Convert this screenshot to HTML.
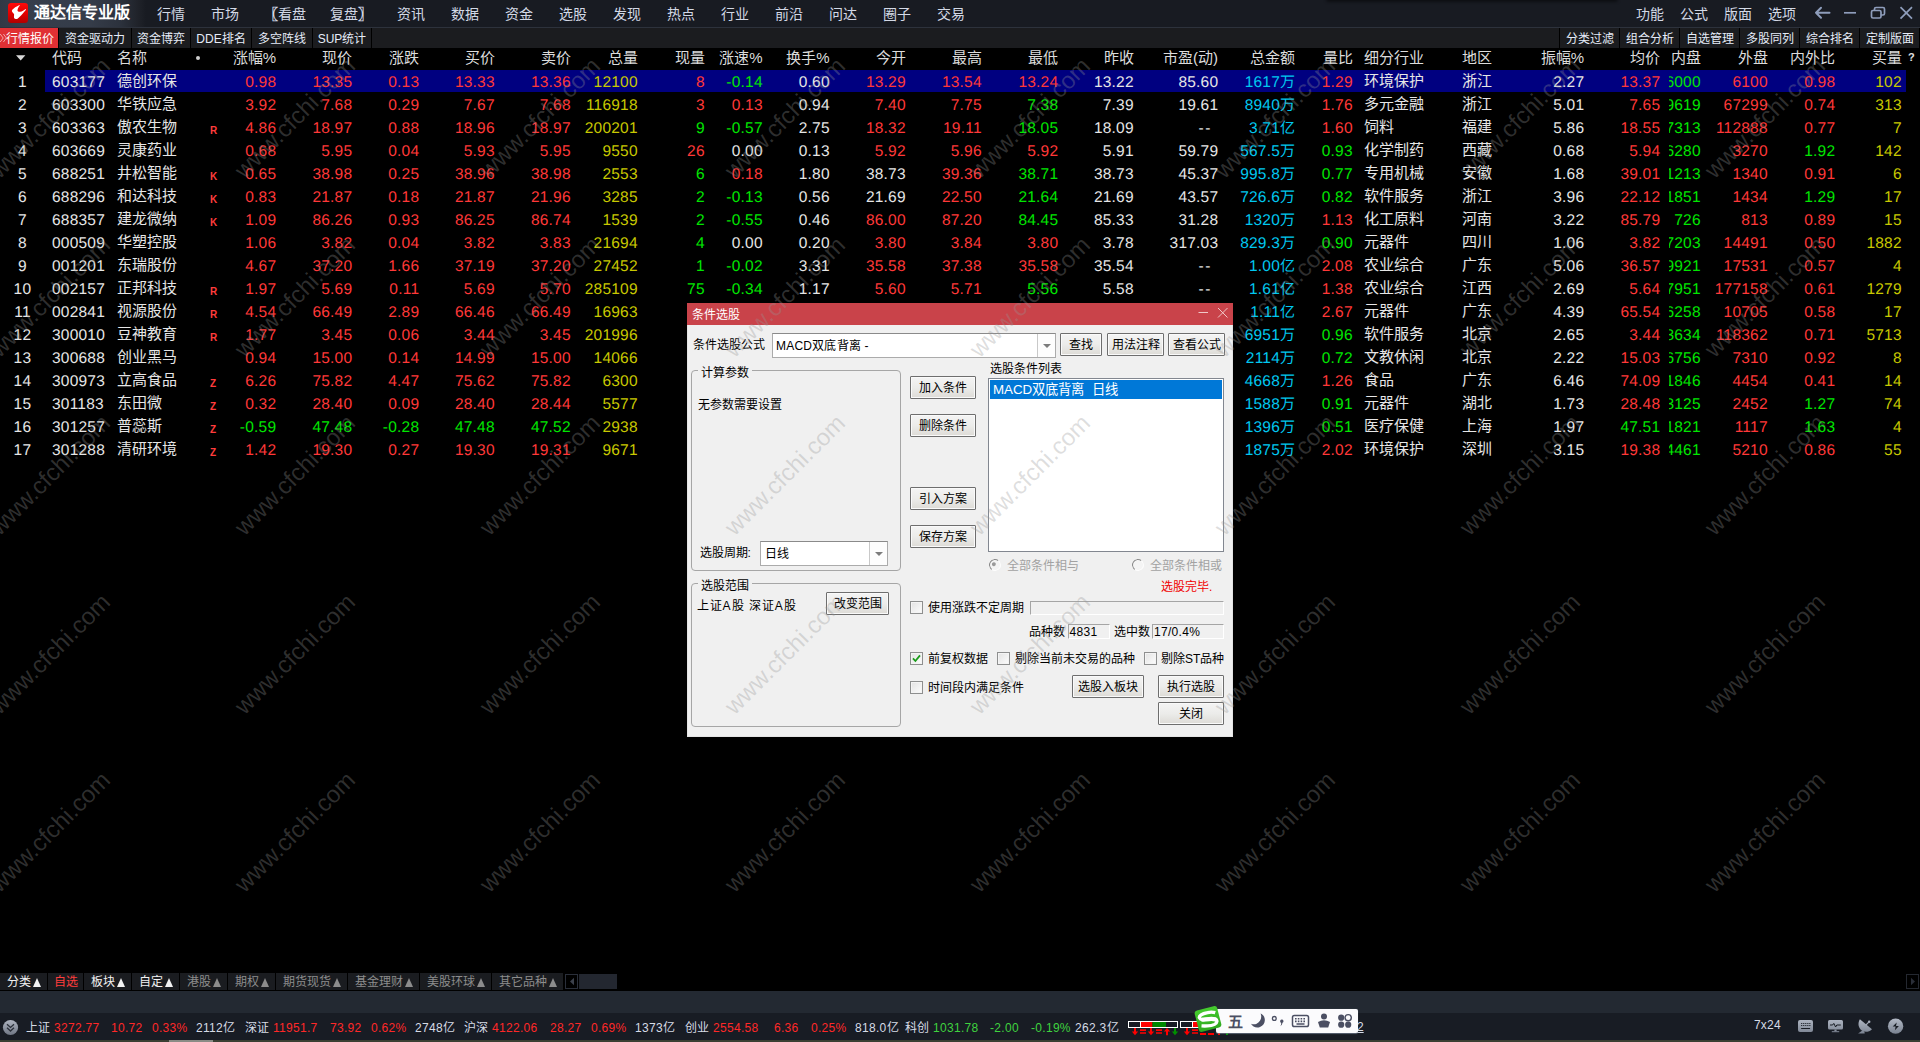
<!DOCTYPE html>
<html lang="zh-CN">
<head>
<meta charset="utf-8">
<title>通达信专业版</title>
<style>
html,body{margin:0;padding:0;background:#000;}
body{width:1920px;height:1042px;overflow:hidden;position:relative;font-family:"Liberation Sans",sans-serif;color:#e4e4e4;}
div,span{box-sizing:border-box;}
.abs{position:absolute;}
/* ---------- title bar ---------- */
#titlebar{position:absolute;left:0;top:0;width:1920px;height:28px;background:#181b22;border-bottom:1px solid #2d323c;}
#titlegrad{position:absolute;left:0;top:0;width:146px;height:27px;background:linear-gradient(90deg,#313845 0%,#363e4c 15%,#353c49 62%,#2c323d 82%,#1f2229 95%,#181b22 100%);}
#logo{position:absolute;left:8px;top:3px;width:20px;height:20px;}
#apptitle{position:absolute;left:34px;top:0;height:27px;line-height:25px;font-size:16px;font-weight:bold;color:#fff;white-space:nowrap;}
.menu{position:absolute;top:0;height:27px;line-height:29px;font-size:14px;color:#d3d9e6;white-space:nowrap;}
.wbtn{position:absolute;top:0;}
/* ---------- toolbar ---------- */
#toolbar{position:absolute;left:0;top:28px;width:1920px;height:20px;background:#1b1c1f;}
.tab{position:absolute;top:0;height:20px;line-height:22px;font-size:12px;color:#e6ecf8;background:#1b1c1f;text-align:center;white-space:nowrap;box-shadow:1px 0 0 #000,-1px 0 0 #000;}
.tab.act{background:#e03034;color:#fff;}
/* ---------- table ---------- */
#grid{position:absolute;left:0;top:48px;width:1920px;height:925px;background:#000;overflow:hidden;}
.hd{position:absolute;top:0;height:22px;line-height:19px;font-size:15px;color:#dcdcdc;white-space:nowrap;}
.row{position:absolute;left:0;width:1920px;height:23px;}
.sel{position:absolute;left:45px;top:0;width:1861px;height:22px;background:#000080;}
.c{position:absolute;top:0;height:23px;line-height:25px;font-size:15.5px;white-space:nowrap;letter-spacing:0.21px;text-rendering:geometricPrecision;}
.cj{position:absolute;top:0;height:23px;line-height:22px;font-size:15px;white-space:nowrap;}
.mk{position:absolute;top:0;height:23px;line-height:29px;font-size:10px;font-weight:bold;color:#ff3c3c;}
.r{color:#ff3838;}.g{color:#00e600;}.w{color:#e6e6e6;}.y{color:#c8c800;}.cy{color:#00c8f0;}
.clip{position:absolute;top:0;height:23px;overflow:hidden;}

/* ---------- bottom tabs ---------- */
#btabs{position:absolute;left:0;top:973px;width:1920px;height:18px;background:#000;}
.bt{position:absolute;top:0;height:17px;line-height:19px;font-size:12px;background:#1a1c20;color:#f2f2f2;white-space:nowrap;text-align:center;}
.bt.dim{color:#8c8c8c;}
.bt.red{color:#ff3c3c;}
.tri{display:inline-block;width:0;height:0;border-left:4.5px solid transparent;border-right:4.5px solid transparent;border-bottom:9px solid currentColor;margin-left:2px;vertical-align:-0.5px;}
#strip{position:absolute;left:0;top:991px;width:1920px;height:22px;background:#232932;}
#status{position:absolute;left:0;top:1013px;width:1920px;height:27px;background:#181c24;}
#bline{position:absolute;left:0;top:1040px;width:1920px;height:2px;background:#3a3f33;}
.st{position:absolute;top:0;height:27px;line-height:31px;font-size:12px;white-space:nowrap;letter-spacing:0.3px;}
.st.n{color:#d6dbe6;}.st.r{color:#ff2828;}.st.g{color:#3fd23f;}
/* sogou */
#sogou{position:absolute;left:1216px;top:1009px;width:142px;height:24px;background:#fbfbfd;border-radius:2px;box-shadow:0 0.5px 1px rgba(120,130,150,0.7);}

.wm{position:absolute;width:200px;height:30px;margin-left:-100px;margin-top:-15px;line-height:30px;text-align:center;font-size:24px;color:rgba(150,150,150,0.31);transform:rotate(-45deg);white-space:nowrap;pointer-events:none;letter-spacing:0px;}

/* ---------- dialog ---------- */
#dlg{position:absolute;left:687px;top:303px;width:546px;height:434px;background:#f0f0f0;border:1px solid #e4e4e4;border-top:none;font-size:12px;color:#000;}
#dlgtitle{position:absolute;left:-1px;top:0;width:546px;height:22px;background:#c9434a;color:#fff;line-height:24px;padding-left:5px;font-size:12px;}
.lb{position:absolute;height:16px;line-height:16px;font-size:12px;color:#000;white-space:nowrap;}
.btn{position:absolute;height:23px;line-height:23.5px;font-size:12px;color:#000;text-align:center;white-space:nowrap;border:1px solid #6e6e6e;border-radius:1px;background:linear-gradient(#f4f4f4 0%,#ececea 50%,#dddbd6 100%);box-shadow:inset 0 0 0 1px #fafafa;}
.grp{position:absolute;border:1px solid #a6a6a6;border-radius:4px;}
.grpl{position:absolute;height:14px;line-height:14px;font-size:12px;background:#f0f0f0;padding:0 3px;white-space:nowrap;}
.combo{position:absolute;background:#fff;border:1px solid #ababab;border-top-color:#8a8a8a;}
.cbtn{position:absolute;right:0;top:0;bottom:0;width:18px;border-left:1px solid #c9c9c9;background:#fdfdfd;}
.cbtn:after{content:"";position:absolute;left:5px;top:50%;margin-top:-2px;border-left:4px solid transparent;border-right:4px solid transparent;border-top:4px solid #7c7c7c;}
.chk{position:absolute;width:13px;height:13px;background:linear-gradient(135deg,#e2e2e2,#fdfdfd);border:1px solid #8e8f8f;box-shadow:inset 0 0 0 1px #f4f4f4;}
.sunk{position:absolute;border:1px solid;border-color:#a5a5a5 #fff #fff #a5a5a5;background:#f0f0f0;font-size:12px;line-height:15px;white-space:nowrap;letter-spacing:0.3px;}
.radio{position:absolute;width:12px;height:12px;border-radius:6px;border:1.6px solid;border-color:#8a8a8a #fdfdfd #fdfdfd #8a8a8a;background:#f4f4f4;transform:rotate(-8deg);}
</style>
</head>
<body>

<div id="titlebar">
<div id="titlegrad"></div>
<div class="abs" style="left:1326px;top:-3px;width:292px;height:5px;border-radius:3px;background:rgba(0,0,0,0.45);filter:blur(1.5px)"></div>
<svg id="logo" viewBox="0 0 20 20" width="20" height="20">
<defs><linearGradient id="lg" x1="0" y1="0" x2="0" y2="1"><stop offset="0" stop-color="#ff0a0a"/><stop offset="0.55" stop-color="#e00000"/><stop offset="1" stop-color="#b00000"/></linearGradient></defs>
<rect x="0" y="0" width="20" height="20" rx="3.2" ry="3.2" fill="url(#lg)"/>
<path d="M11.5 2.1 C10 2.9 8.4 3.7 7.2 4.3 C6 5.2 4.8 6.2 4.2 7 C3.8 7.6 3.8 8.2 4 8.6 C4.4 9.4 5.2 10.2 6 11 C6.2 11.6 6 12.6 5.95 14 C6 15 6.4 15.6 7 15.8 C7.8 16.1 8.6 16.1 9.2 15.9 C10.2 15.2 11.2 14.3 12 13.4 C13 12.4 14 11.3 15 10.2 C16 9 17 7.9 18 6.7 C17.9 6.4 17.7 6.2 17.4 6.1 C16.6 6.7 15.8 7.3 15 7.75 C14 8.3 13 8.6 12.2 8.7 C11.4 8.8 10.6 8.7 10.2 8.45 C9.7 8.2 9.5 7.9 9.5 7.4 C9.5 6.7 9.7 6 10 5.2 C10.5 4.2 11.1 3.4 11.8 2.5 Z" fill="#fff"/>
</svg>
<div id="apptitle">通达信专业版</div>
<div class="menu" style="left:157px">行情</div>
<div class="menu" style="left:211px">市场</div>
<div class="menu" style="left:264px"><b>〖</b>看盘</div>
<div class="menu" style="left:330px">复盘<b>〗</b></div>
<div class="menu" style="left:397px">资讯</div>
<div class="menu" style="left:451px">数据</div>
<div class="menu" style="left:505px">资金</div>
<div class="menu" style="left:559px">选股</div>
<div class="menu" style="left:613px">发现</div>
<div class="menu" style="left:667px">热点</div>
<div class="menu" style="left:721px">行业</div>
<div class="menu" style="left:775px">前沿</div>
<div class="menu" style="left:829px">问达</div>
<div class="menu" style="left:883px">圈子</div>
<div class="menu" style="left:937px">交易</div>
<div class="menu" style="left:1635.5px">功能</div>
<div class="menu" style="left:1680px">公式</div>
<div class="menu" style="left:1724px">版面</div>
<div class="menu" style="left:1767.5px">选项</div>
<svg class="wbtn" style="left:1810px" width="110" height="27" viewBox="0 0 110 27">
<g fill="none" stroke="#8e9dbb" stroke-width="2" stroke-linecap="round" stroke-linejoin="round">
<path d="M6 12.8 H19.5 M11 7.8 L6 12.8 L11 17.8"/>
</g>
<g fill="none" stroke="#8e9dbb" stroke-width="1.7">
<path d="M34 12.8 H46"/>
<rect x="61.5" y="10.5" width="9.5" height="7.5" rx="1.5"/>
<path d="M64.5 10.5 V9 Q64.5 7.5 66 7.5 H73 Q74.5 7.5 74.5 9 V13.5 Q74.5 15 73 15 H71"/>
<path d="M90.5 7.2 L102 18.6 M102 7.2 L90.5 18.6"/>
</g>
</svg>
</div>
<div id="toolbar">
<div class="tab act" style="left:0px;width:58px;text-align:left;padding-left:6px"><svg style="position:absolute;left:0;top:5px" width="8" height="10" viewBox="0 0 8 10"><path d="M0.2 1 L3.2 5 L0.2 9 M3.4 1 L6.4 5 L3.4 9" fill="none" stroke="#f2a6a6" stroke-width="1"/></svg>行情报价</div>
<div class="tab" style="left:59px;width:72px">资金驱动力</div>
<div class="tab" style="left:132px;width:58px">资金博弈</div>
<div class="tab" style="left:191px;width:60px">DDE排名</div>
<div class="tab" style="left:252px;width:60px">多空阵线</div>
<div class="tab" style="left:313px;width:58px">SUP统计</div>
<div class="tab" style="left:1560px;width:59px">分类过滤</div>
<div class="tab" style="left:1620px;width:59px">组合分析</div>
<div class="tab" style="left:1680px;width:59px">自选管理</div>
<div class="tab" style="left:1740px;width:59px">多股同列</div>
<div class="tab" style="left:1800px;width:59px">综合排名</div>
<div class="tab" style="left:1860px;width:59px">定制版面</div>
</div>
<div id="grid">
<div class="hd" style="left:0;width:1920px">
<svg class="abs" style="left:15px;top:6px" width="12" height="8" viewBox="0 0 12 8"><path d="M1 1.2 H10.4 L5.7 6.6 Z" fill="#d8d8d8"/></svg>
<span class="abs" style="left:196px;top:8px;width:4px;height:4px;border-radius:2px;background:#d0d0d0"></span>
<span class="hd" style="left:52px">代码</span>
<span class="hd" style="left:117px">名称</span>
<span class="hd" style="right:1644px">涨幅%</span>
<span class="hd" style="right:1568px">现价</span>
<span class="hd" style="right:1501px">涨跌</span>
<span class="hd" style="right:1425.5px">买价</span>
<span class="hd" style="right:1349.5px">卖价</span>
<span class="hd" style="right:1282.5px">总量</span>
<span class="hd" style="right:1215.5px">现量</span>
<span class="hd" style="right:1157.5px">涨速%</span>
<span class="hd" style="right:1090.5px">换手%</span>
<span class="hd" style="right:1014.5px">今开</span>
<span class="hd" style="right:938.5px">最高</span>
<span class="hd" style="right:862px">最低</span>
<span class="hd" style="right:786.5px">昨收</span>
<span class="hd" style="right:702px">市盈(动)</span>
<span class="hd" style="right:625px">总金额</span>
<span class="hd" style="right:567.5px">量比</span>
<span class="hd" style="left:1364px">细分行业</span>
<span class="hd" style="left:1462px">地区</span>
<span class="hd" style="right:336px">振幅%</span>
<span class="hd" style="right:260px">均价</span>
<span class="hd" style="left:1671px">内盘</span>
<span class="hd" style="right:152.5px">外盘</span>
<span class="hd" style="right:85px">内外比</span>
<span class="hd" style="right:18.5px">买量</span>
<span class="abs" style="left:1908px;top:2px;font-size:11px;font-weight:bold;line-height:14px;color:#e0e0e0">?</span>
</div>
<div class="row" style="top:22px">
<div class="sel"></div>
<span class="c w" style="left:0;width:45px;text-align:center;letter-spacing:0.3px">1</span>
<span class="c w" style="left:52px">603177</span>
<span class="cj w" style="left:117px">德创环保</span>
<span class="c r" style="right:1643.79px">0.98</span>
<span class="c r" style="right:1567.79px">13.35</span>
<span class="c r" style="right:1500.79px">0.13</span>
<span class="c r" style="right:1425.29px">13.33</span>
<span class="c r" style="right:1349.29px">13.36</span>
<span class="c y" style="right:1282.29px">12100</span>
<span class="c r" style="right:1215.29px">8</span>
<span class="c g" style="right:1157.29px">-0.14</span>
<span class="c w" style="right:1090.29px">0.60</span>
<span class="c r" style="right:1014.29px">13.29</span>
<span class="c r" style="right:938.29px">13.54</span>
<span class="c r" style="right:861.79px">13.24</span>
<span class="c w" style="right:786.29px">13.22</span>
<span class="c w" style="right:701.79px">85.60</span>
<span class="c cy" style="right:625.00px">1617<span style="letter-spacing:0;font-size:15px">万</span></span>
<span class="c r" style="right:567.29px">1.29</span>
<span class="cj w" style="left:1364px">环境保护</span>
<span class="cj w" style="left:1462px">浙江</span>
<span class="c w" style="right:335.79px">2.27</span>
<span class="c r" style="right:259.79px">13.37</span>
<span class="clip" style="left:1669px;width:32.5px"><span class="c g" style="right:0.79px">6000</span></span>
<span class="c r" style="right:152.29px">6100</span>
<span class="c r" style="right:84.79px">0.98</span>
<span class="c y" style="right:18.29px">102</span>
</div>
<div class="row" style="top:45px">
<span class="c w" style="left:0;width:45px;text-align:center;letter-spacing:0.3px">2</span>
<span class="c w" style="left:52px">603300</span>
<span class="cj w" style="left:117px">华铁应急</span>
<span class="c r" style="right:1643.79px">3.92</span>
<span class="c r" style="right:1567.79px">7.68</span>
<span class="c r" style="right:1500.79px">0.29</span>
<span class="c r" style="right:1425.29px">7.67</span>
<span class="c r" style="right:1349.29px">7.68</span>
<span class="c y" style="right:1282.29px">116918</span>
<span class="c r" style="right:1215.29px">3</span>
<span class="c r" style="right:1157.29px">0.13</span>
<span class="c w" style="right:1090.29px">0.94</span>
<span class="c r" style="right:1014.29px">7.40</span>
<span class="c r" style="right:938.29px">7.75</span>
<span class="c g" style="right:861.79px">7.38</span>
<span class="c w" style="right:786.29px">7.39</span>
<span class="c w" style="right:701.79px">19.61</span>
<span class="c cy" style="right:625.00px">8940<span style="letter-spacing:0;font-size:15px">万</span></span>
<span class="c r" style="right:567.29px">1.76</span>
<span class="cj w" style="left:1364px">多元金融</span>
<span class="cj w" style="left:1462px">浙江</span>
<span class="c w" style="right:335.79px">5.01</span>
<span class="c r" style="right:259.79px">7.65</span>
<span class="clip" style="left:1669px;width:32.5px"><span class="c g" style="right:0.79px">49619</span></span>
<span class="c r" style="right:152.29px">67299</span>
<span class="c r" style="right:84.79px">0.74</span>
<span class="c y" style="right:18.29px">313</span>
</div>
<div class="row" style="top:68px">
<span class="c w" style="left:0;width:45px;text-align:center;letter-spacing:0.3px">3</span>
<span class="c w" style="left:52px">603363</span>
<span class="cj w" style="left:117px">傲农生物</span>
<span class="mk" style="left:210px">R</span>
<span class="c r" style="right:1643.79px">4.86</span>
<span class="c r" style="right:1567.79px">18.97</span>
<span class="c r" style="right:1500.79px">0.88</span>
<span class="c r" style="right:1425.29px">18.96</span>
<span class="c r" style="right:1349.29px">18.97</span>
<span class="c y" style="right:1282.29px">200201</span>
<span class="c g" style="right:1215.29px">9</span>
<span class="c g" style="right:1157.29px">-0.57</span>
<span class="c w" style="right:1090.29px">2.75</span>
<span class="c r" style="right:1014.29px">18.32</span>
<span class="c r" style="right:938.29px">19.11</span>
<span class="c g" style="right:861.79px">18.05</span>
<span class="c w" style="right:786.29px">18.09</span>
<span class="c w" style="right:708.00px;letter-spacing:1.6px">--</span>
<span class="c cy" style="right:625.00px">3.71<span style="letter-spacing:0;font-size:15px">亿</span></span>
<span class="c r" style="right:567.29px">1.60</span>
<span class="cj w" style="left:1364px">饲料</span>
<span class="cj w" style="left:1462px">福建</span>
<span class="c w" style="right:335.79px">5.86</span>
<span class="c r" style="right:259.79px">18.55</span>
<span class="clip" style="left:1669px;width:32.5px"><span class="c g" style="right:0.79px">87313</span></span>
<span class="c r" style="right:152.29px">112888</span>
<span class="c r" style="right:84.79px">0.77</span>
<span class="c y" style="right:18.29px">7</span>
</div>
<div class="row" style="top:91px">
<span class="c w" style="left:0;width:45px;text-align:center;letter-spacing:0.3px">4</span>
<span class="c w" style="left:52px">603669</span>
<span class="cj w" style="left:117px">灵康药业</span>
<span class="c r" style="right:1643.79px">0.68</span>
<span class="c r" style="right:1567.79px">5.95</span>
<span class="c r" style="right:1500.79px">0.04</span>
<span class="c r" style="right:1425.29px">5.93</span>
<span class="c r" style="right:1349.29px">5.95</span>
<span class="c y" style="right:1282.29px">9550</span>
<span class="c r" style="right:1215.29px">26</span>
<span class="c w" style="right:1157.29px">0.00</span>
<span class="c w" style="right:1090.29px">0.13</span>
<span class="c r" style="right:1014.29px">5.92</span>
<span class="c r" style="right:938.29px">5.96</span>
<span class="c r" style="right:861.79px">5.92</span>
<span class="c w" style="right:786.29px">5.91</span>
<span class="c w" style="right:701.79px">59.79</span>
<span class="c cy" style="right:625.00px">567.5<span style="letter-spacing:0;font-size:15px">万</span></span>
<span class="c g" style="right:567.29px">0.93</span>
<span class="cj w" style="left:1364px">化学制药</span>
<span class="cj w" style="left:1462px">西藏</span>
<span class="c w" style="right:335.79px">0.68</span>
<span class="c r" style="right:259.79px">5.94</span>
<span class="clip" style="left:1669px;width:32.5px"><span class="c g" style="right:0.79px">6280</span></span>
<span class="c r" style="right:152.29px">3270</span>
<span class="c g" style="right:84.79px">1.92</span>
<span class="c y" style="right:18.29px">142</span>
</div>
<div class="row" style="top:114px">
<span class="c w" style="left:0;width:45px;text-align:center;letter-spacing:0.3px">5</span>
<span class="c w" style="left:52px">688251</span>
<span class="cj w" style="left:117px">井松智能</span>
<span class="mk" style="left:210px">K</span>
<span class="c r" style="right:1643.79px">0.65</span>
<span class="c r" style="right:1567.79px">38.98</span>
<span class="c r" style="right:1500.79px">0.25</span>
<span class="c r" style="right:1425.29px">38.96</span>
<span class="c r" style="right:1349.29px">38.98</span>
<span class="c y" style="right:1282.29px">2553</span>
<span class="c g" style="right:1215.29px">6</span>
<span class="c r" style="right:1157.29px">0.18</span>
<span class="c w" style="right:1090.29px">1.80</span>
<span class="c w" style="right:1014.29px">38.73</span>
<span class="c r" style="right:938.29px">39.36</span>
<span class="c g" style="right:861.79px">38.71</span>
<span class="c w" style="right:786.29px">38.73</span>
<span class="c w" style="right:701.79px">45.37</span>
<span class="c cy" style="right:625.00px">995.8<span style="letter-spacing:0;font-size:15px">万</span></span>
<span class="c g" style="right:567.29px">0.77</span>
<span class="cj w" style="left:1364px">专用机械</span>
<span class="cj w" style="left:1462px">安徽</span>
<span class="c w" style="right:335.79px">1.68</span>
<span class="c r" style="right:259.79px">39.01</span>
<span class="clip" style="left:1669px;width:32.5px"><span class="c g" style="right:0.79px">1213</span></span>
<span class="c r" style="right:152.29px">1340</span>
<span class="c r" style="right:84.79px">0.91</span>
<span class="c y" style="right:18.29px">6</span>
</div>
<div class="row" style="top:137px">
<span class="c w" style="left:0;width:45px;text-align:center;letter-spacing:0.3px">6</span>
<span class="c w" style="left:52px">688296</span>
<span class="cj w" style="left:117px">和达科技</span>
<span class="mk" style="left:210px">K</span>
<span class="c r" style="right:1643.79px">0.83</span>
<span class="c r" style="right:1567.79px">21.87</span>
<span class="c r" style="right:1500.79px">0.18</span>
<span class="c r" style="right:1425.29px">21.87</span>
<span class="c r" style="right:1349.29px">21.96</span>
<span class="c y" style="right:1282.29px">3285</span>
<span class="c g" style="right:1215.29px">2</span>
<span class="c g" style="right:1157.29px">-0.13</span>
<span class="c w" style="right:1090.29px">0.56</span>
<span class="c w" style="right:1014.29px">21.69</span>
<span class="c r" style="right:938.29px">22.50</span>
<span class="c g" style="right:861.79px">21.64</span>
<span class="c w" style="right:786.29px">21.69</span>
<span class="c w" style="right:701.79px">43.57</span>
<span class="c cy" style="right:625.00px">726.6<span style="letter-spacing:0;font-size:15px">万</span></span>
<span class="c g" style="right:567.29px">0.82</span>
<span class="cj w" style="left:1364px">软件服务</span>
<span class="cj w" style="left:1462px">浙江</span>
<span class="c w" style="right:335.79px">3.96</span>
<span class="c r" style="right:259.79px">22.12</span>
<span class="clip" style="left:1669px;width:32.5px"><span class="c g" style="right:0.79px">1851</span></span>
<span class="c r" style="right:152.29px">1434</span>
<span class="c g" style="right:84.79px">1.29</span>
<span class="c y" style="right:18.29px">17</span>
</div>
<div class="row" style="top:160px">
<span class="c w" style="left:0;width:45px;text-align:center;letter-spacing:0.3px">7</span>
<span class="c w" style="left:52px">688357</span>
<span class="cj w" style="left:117px">建龙微纳</span>
<span class="mk" style="left:210px">K</span>
<span class="c r" style="right:1643.79px">1.09</span>
<span class="c r" style="right:1567.79px">86.26</span>
<span class="c r" style="right:1500.79px">0.93</span>
<span class="c r" style="right:1425.29px">86.25</span>
<span class="c r" style="right:1349.29px">86.74</span>
<span class="c y" style="right:1282.29px">1539</span>
<span class="c g" style="right:1215.29px">2</span>
<span class="c g" style="right:1157.29px">-0.55</span>
<span class="c w" style="right:1090.29px">0.46</span>
<span class="c r" style="right:1014.29px">86.00</span>
<span class="c r" style="right:938.29px">87.20</span>
<span class="c g" style="right:861.79px">84.45</span>
<span class="c w" style="right:786.29px">85.33</span>
<span class="c w" style="right:701.79px">31.28</span>
<span class="c cy" style="right:625.00px">1320<span style="letter-spacing:0;font-size:15px">万</span></span>
<span class="c r" style="right:567.29px">1.13</span>
<span class="cj w" style="left:1364px">化工原料</span>
<span class="cj w" style="left:1462px">河南</span>
<span class="c w" style="right:335.79px">3.22</span>
<span class="c r" style="right:259.79px">85.79</span>
<span class="clip" style="left:1669px;width:32.5px"><span class="c g" style="right:0.79px">726</span></span>
<span class="c r" style="right:152.29px">813</span>
<span class="c r" style="right:84.79px">0.89</span>
<span class="c y" style="right:18.29px">15</span>
</div>
<div class="row" style="top:183px">
<span class="c w" style="left:0;width:45px;text-align:center;letter-spacing:0.3px">8</span>
<span class="c w" style="left:52px">000509</span>
<span class="cj w" style="left:117px">华塑控股</span>
<span class="c r" style="right:1643.79px">1.06</span>
<span class="c r" style="right:1567.79px">3.82</span>
<span class="c r" style="right:1500.79px">0.04</span>
<span class="c r" style="right:1425.29px">3.82</span>
<span class="c r" style="right:1349.29px">3.83</span>
<span class="c y" style="right:1282.29px">21694</span>
<span class="c g" style="right:1215.29px">4</span>
<span class="c w" style="right:1157.29px">0.00</span>
<span class="c w" style="right:1090.29px">0.20</span>
<span class="c r" style="right:1014.29px">3.80</span>
<span class="c r" style="right:938.29px">3.84</span>
<span class="c r" style="right:861.79px">3.80</span>
<span class="c w" style="right:786.29px">3.78</span>
<span class="c w" style="right:701.79px">317.03</span>
<span class="c cy" style="right:625.00px">829.3<span style="letter-spacing:0;font-size:15px">万</span></span>
<span class="c g" style="right:567.29px">0.90</span>
<span class="cj w" style="left:1364px">元器件</span>
<span class="cj w" style="left:1462px">四川</span>
<span class="c w" style="right:335.79px">1.06</span>
<span class="c r" style="right:259.79px">3.82</span>
<span class="clip" style="left:1669px;width:32.5px"><span class="c g" style="right:0.79px">7203</span></span>
<span class="c r" style="right:152.29px">14491</span>
<span class="c r" style="right:84.79px">0.50</span>
<span class="c y" style="right:18.29px">1882</span>
</div>
<div class="row" style="top:206px">
<span class="c w" style="left:0;width:45px;text-align:center;letter-spacing:0.3px">9</span>
<span class="c w" style="left:52px">001201</span>
<span class="cj w" style="left:117px">东瑞股份</span>
<span class="c r" style="right:1643.79px">4.67</span>
<span class="c r" style="right:1567.79px">37.20</span>
<span class="c r" style="right:1500.79px">1.66</span>
<span class="c r" style="right:1425.29px">37.19</span>
<span class="c r" style="right:1349.29px">37.20</span>
<span class="c y" style="right:1282.29px">27452</span>
<span class="c g" style="right:1215.29px">1</span>
<span class="c g" style="right:1157.29px">-0.02</span>
<span class="c w" style="right:1090.29px">3.31</span>
<span class="c r" style="right:1014.29px">35.58</span>
<span class="c r" style="right:938.29px">37.38</span>
<span class="c r" style="right:861.79px">35.58</span>
<span class="c w" style="right:786.29px">35.54</span>
<span class="c w" style="right:708.00px;letter-spacing:1.6px">--</span>
<span class="c cy" style="right:625.00px">1.00<span style="letter-spacing:0;font-size:15px">亿</span></span>
<span class="c r" style="right:567.29px">2.08</span>
<span class="cj w" style="left:1364px">农业综合</span>
<span class="cj w" style="left:1462px">广东</span>
<span class="c w" style="right:335.79px">5.06</span>
<span class="c r" style="right:259.79px">36.57</span>
<span class="clip" style="left:1669px;width:32.5px"><span class="c g" style="right:0.79px">9921</span></span>
<span class="c r" style="right:152.29px">17531</span>
<span class="c r" style="right:84.79px">0.57</span>
<span class="c y" style="right:18.29px">4</span>
</div>
<div class="row" style="top:229px">
<span class="c w" style="left:0;width:45px;text-align:center;letter-spacing:0.3px">10</span>
<span class="c w" style="left:52px">002157</span>
<span class="cj w" style="left:117px">正邦科技</span>
<span class="mk" style="left:210px">R</span>
<span class="c r" style="right:1643.79px">1.97</span>
<span class="c r" style="right:1567.79px">5.69</span>
<span class="c r" style="right:1500.79px">0.11</span>
<span class="c r" style="right:1425.29px">5.69</span>
<span class="c r" style="right:1349.29px">5.70</span>
<span class="c y" style="right:1282.29px">285109</span>
<span class="c g" style="right:1215.29px">75</span>
<span class="c g" style="right:1157.29px">-0.34</span>
<span class="c w" style="right:1090.29px">1.17</span>
<span class="c r" style="right:1014.29px">5.60</span>
<span class="c r" style="right:938.29px">5.71</span>
<span class="c g" style="right:861.79px">5.56</span>
<span class="c w" style="right:786.29px">5.58</span>
<span class="c w" style="right:708.00px;letter-spacing:1.6px">--</span>
<span class="c cy" style="right:625.00px">1.61<span style="letter-spacing:0;font-size:15px">亿</span></span>
<span class="c r" style="right:567.29px">1.38</span>
<span class="cj w" style="left:1364px">农业综合</span>
<span class="cj w" style="left:1462px">江西</span>
<span class="c w" style="right:335.79px">2.69</span>
<span class="c r" style="right:259.79px">5.64</span>
<span class="clip" style="left:1669px;width:32.5px"><span class="c g" style="right:0.79px">107951</span></span>
<span class="c r" style="right:152.29px">177158</span>
<span class="c r" style="right:84.79px">0.61</span>
<span class="c y" style="right:18.29px">1279</span>
</div>
<div class="row" style="top:252px">
<span class="c w" style="left:0;width:45px;text-align:center;letter-spacing:0.3px">11</span>
<span class="c w" style="left:52px">002841</span>
<span class="cj w" style="left:117px">视源股份</span>
<span class="mk" style="left:210px">R</span>
<span class="c r" style="right:1643.79px">4.54</span>
<span class="c r" style="right:1567.79px">66.49</span>
<span class="c r" style="right:1500.79px">2.89</span>
<span class="c r" style="right:1425.29px">66.46</span>
<span class="c r" style="right:1349.29px">66.49</span>
<span class="c y" style="right:1282.29px">16963</span>
<span class="c r" style="right:1215.29px">5</span>
<span class="c r" style="right:1157.29px">0.02</span>
<span class="c w" style="right:1090.29px">0.42</span>
<span class="c r" style="right:1014.29px">63.80</span>
<span class="c r" style="right:938.29px">66.88</span>
<span class="c r" style="right:861.79px">63.80</span>
<span class="c w" style="right:786.29px">63.60</span>
<span class="c w" style="right:701.79px">23.17</span>
<span class="c cy" style="right:625.00px">1.11<span style="letter-spacing:0;font-size:15px">亿</span></span>
<span class="c r" style="right:567.29px">2.67</span>
<span class="cj w" style="left:1364px">元器件</span>
<span class="cj w" style="left:1462px">广东</span>
<span class="c w" style="right:335.79px">4.39</span>
<span class="c r" style="right:259.79px">65.54</span>
<span class="clip" style="left:1669px;width:32.5px"><span class="c g" style="right:0.79px">6258</span></span>
<span class="c r" style="right:152.29px">10705</span>
<span class="c r" style="right:84.79px">0.58</span>
<span class="c y" style="right:18.29px">17</span>
</div>
<div class="row" style="top:275px">
<span class="c w" style="left:0;width:45px;text-align:center;letter-spacing:0.3px">12</span>
<span class="c w" style="left:52px">300010</span>
<span class="cj w" style="left:117px">豆神教育</span>
<span class="mk" style="left:210px">R</span>
<span class="c r" style="right:1643.79px">1.77</span>
<span class="c r" style="right:1567.79px">3.45</span>
<span class="c r" style="right:1500.79px">0.06</span>
<span class="c r" style="right:1425.29px">3.44</span>
<span class="c r" style="right:1349.29px">3.45</span>
<span class="c y" style="right:1282.29px">201996</span>
<span class="c g" style="right:1215.29px">12</span>
<span class="c w" style="right:1157.29px">0.00</span>
<span class="c w" style="right:1090.29px">2.65</span>
<span class="c w" style="right:1014.29px">3.39</span>
<span class="c r" style="right:938.29px">3.47</span>
<span class="c g" style="right:861.79px">3.38</span>
<span class="c w" style="right:786.29px">3.39</span>
<span class="c w" style="right:708.00px;letter-spacing:1.6px">--</span>
<span class="c cy" style="right:625.00px">6951<span style="letter-spacing:0;font-size:15px">万</span></span>
<span class="c g" style="right:567.29px">0.96</span>
<span class="cj w" style="left:1364px">软件服务</span>
<span class="cj w" style="left:1462px">北京</span>
<span class="c w" style="right:335.79px">2.65</span>
<span class="c r" style="right:259.79px">3.44</span>
<span class="clip" style="left:1669px;width:32.5px"><span class="c g" style="right:0.79px">83634</span></span>
<span class="c r" style="right:152.29px">118362</span>
<span class="c r" style="right:84.79px">0.71</span>
<span class="c y" style="right:18.29px">5713</span>
</div>
<div class="row" style="top:298px">
<span class="c w" style="left:0;width:45px;text-align:center;letter-spacing:0.3px">13</span>
<span class="c w" style="left:52px">300688</span>
<span class="cj w" style="left:117px">创业黑马</span>
<span class="c r" style="right:1643.79px">0.94</span>
<span class="c r" style="right:1567.79px">15.00</span>
<span class="c r" style="right:1500.79px">0.14</span>
<span class="c r" style="right:1425.29px">14.99</span>
<span class="c r" style="right:1349.29px">15.00</span>
<span class="c y" style="right:1282.29px">14066</span>
<span class="c r" style="right:1215.29px">3</span>
<span class="c r" style="right:1157.29px">0.07</span>
<span class="c w" style="right:1090.29px">1.31</span>
<span class="c w" style="right:1014.29px">14.86</span>
<span class="c r" style="right:938.29px">15.13</span>
<span class="c g" style="right:861.79px">14.80</span>
<span class="c w" style="right:786.29px">14.86</span>
<span class="c w" style="right:708.00px;letter-spacing:1.6px">--</span>
<span class="c cy" style="right:625.00px">2114<span style="letter-spacing:0;font-size:15px">万</span></span>
<span class="c g" style="right:567.29px">0.72</span>
<span class="cj w" style="left:1364px">文教休闲</span>
<span class="cj w" style="left:1462px">北京</span>
<span class="c w" style="right:335.79px">2.22</span>
<span class="c r" style="right:259.79px">15.03</span>
<span class="clip" style="left:1669px;width:32.5px"><span class="c g" style="right:0.79px">6756</span></span>
<span class="c r" style="right:152.29px">7310</span>
<span class="c r" style="right:84.79px">0.92</span>
<span class="c y" style="right:18.29px">8</span>
</div>
<div class="row" style="top:321px">
<span class="c w" style="left:0;width:45px;text-align:center;letter-spacing:0.3px">14</span>
<span class="c w" style="left:52px">300973</span>
<span class="cj w" style="left:117px">立高食品</span>
<span class="mk" style="left:210px">Z</span>
<span class="c r" style="right:1643.79px">6.26</span>
<span class="c r" style="right:1567.79px">75.82</span>
<span class="c r" style="right:1500.79px">4.47</span>
<span class="c r" style="right:1425.29px">75.62</span>
<span class="c r" style="right:1349.29px">75.82</span>
<span class="c y" style="right:1282.29px">6300</span>
<span class="c g" style="right:1215.29px">1</span>
<span class="c g" style="right:1157.29px">-0.25</span>
<span class="c w" style="right:1090.29px">0.71</span>
<span class="c r" style="right:1014.29px">71.40</span>
<span class="c r" style="right:938.29px">76.00</span>
<span class="c r" style="right:861.79px">71.39</span>
<span class="c w" style="right:786.29px">71.35</span>
<span class="c w" style="right:701.79px">50.12</span>
<span class="c cy" style="right:625.00px">4668<span style="letter-spacing:0;font-size:15px">万</span></span>
<span class="c r" style="right:567.29px">1.26</span>
<span class="cj w" style="left:1364px">食品</span>
<span class="cj w" style="left:1462px">广东</span>
<span class="c w" style="right:335.79px">6.46</span>
<span class="c r" style="right:259.79px">74.09</span>
<span class="clip" style="left:1669px;width:32.5px"><span class="c g" style="right:0.79px">1846</span></span>
<span class="c r" style="right:152.29px">4454</span>
<span class="c r" style="right:84.79px">0.41</span>
<span class="c y" style="right:18.29px">14</span>
</div>
<div class="row" style="top:344px">
<span class="c w" style="left:0;width:45px;text-align:center;letter-spacing:0.3px">15</span>
<span class="c w" style="left:52px">301183</span>
<span class="cj w" style="left:117px">东田微</span>
<span class="mk" style="left:210px">Z</span>
<span class="c r" style="right:1643.79px">0.32</span>
<span class="c r" style="right:1567.79px">28.40</span>
<span class="c r" style="right:1500.79px">0.09</span>
<span class="c r" style="right:1425.29px">28.40</span>
<span class="c r" style="right:1349.29px">28.44</span>
<span class="c y" style="right:1282.29px">5577</span>
<span class="c r" style="right:1215.29px">2</span>
<span class="c w" style="right:1157.29px">0.00</span>
<span class="c w" style="right:1090.29px">2.94</span>
<span class="c w" style="right:1014.29px">28.31</span>
<span class="c r" style="right:938.29px">28.70</span>
<span class="c g" style="right:861.79px">28.21</span>
<span class="c w" style="right:786.29px">28.31</span>
<span class="c w" style="right:701.79px">41.20</span>
<span class="c cy" style="right:625.00px">1588<span style="letter-spacing:0;font-size:15px">万</span></span>
<span class="c g" style="right:567.29px">0.91</span>
<span class="cj w" style="left:1364px">元器件</span>
<span class="cj w" style="left:1462px">湖北</span>
<span class="c w" style="right:335.79px">1.73</span>
<span class="c r" style="right:259.79px">28.48</span>
<span class="clip" style="left:1669px;width:32.5px"><span class="c g" style="right:0.79px">3125</span></span>
<span class="c r" style="right:152.29px">2452</span>
<span class="c g" style="right:84.79px">1.27</span>
<span class="c y" style="right:18.29px">74</span>
</div>
<div class="row" style="top:367px">
<span class="c w" style="left:0;width:45px;text-align:center;letter-spacing:0.3px">16</span>
<span class="c w" style="left:52px">301257</span>
<span class="cj w" style="left:117px">普蕊斯</span>
<span class="mk" style="left:210px">Z</span>
<span class="c g" style="right:1643.79px">-0.59</span>
<span class="c g" style="right:1567.79px">47.48</span>
<span class="c g" style="right:1500.79px">-0.28</span>
<span class="c g" style="right:1425.29px">47.48</span>
<span class="c g" style="right:1349.29px">47.52</span>
<span class="c y" style="right:1282.29px">2938</span>
<span class="c g" style="right:1215.29px">4</span>
<span class="c g" style="right:1157.29px">-0.06</span>
<span class="c w" style="right:1090.29px">1.96</span>
<span class="c w" style="right:1014.29px">47.76</span>
<span class="c r" style="right:938.29px">48.06</span>
<span class="c g" style="right:861.79px">47.12</span>
<span class="c w" style="right:786.29px">47.76</span>
<span class="c w" style="right:701.79px">52.31</span>
<span class="c cy" style="right:625.00px">1396<span style="letter-spacing:0;font-size:15px">万</span></span>
<span class="c g" style="right:567.29px">0.51</span>
<span class="cj w" style="left:1364px">医疗保健</span>
<span class="cj w" style="left:1462px">上海</span>
<span class="c w" style="right:335.79px">1.97</span>
<span class="c g" style="right:259.79px">47.51</span>
<span class="clip" style="left:1669px;width:32.5px"><span class="c g" style="right:0.79px">1821</span></span>
<span class="c r" style="right:152.29px">1117</span>
<span class="c g" style="right:84.79px">1.63</span>
<span class="c y" style="right:18.29px">4</span>
</div>
<div class="row" style="top:390px">
<span class="c w" style="left:0;width:45px;text-align:center;letter-spacing:0.3px">17</span>
<span class="c w" style="left:52px">301288</span>
<span class="cj w" style="left:117px">清研环境</span>
<span class="mk" style="left:210px">Z</span>
<span class="c r" style="right:1643.79px">1.42</span>
<span class="c r" style="right:1567.79px">19.30</span>
<span class="c r" style="right:1500.79px">0.27</span>
<span class="c r" style="right:1425.29px">19.30</span>
<span class="c r" style="right:1349.29px">19.31</span>
<span class="c y" style="right:1282.29px">9671</span>
<span class="c r" style="right:1215.29px">7</span>
<span class="c r" style="right:1157.29px">0.05</span>
<span class="c w" style="right:1090.29px">3.58</span>
<span class="c w" style="right:1014.29px">19.03</span>
<span class="c r" style="right:938.29px">19.60</span>
<span class="c g" style="right:861.79px">19.00</span>
<span class="c w" style="right:786.29px">19.03</span>
<span class="c w" style="right:701.79px">27.64</span>
<span class="c cy" style="right:625.00px">1875<span style="letter-spacing:0;font-size:15px">万</span></span>
<span class="c r" style="right:567.29px">2.02</span>
<span class="cj w" style="left:1364px">环境保护</span>
<span class="cj w" style="left:1462px">深圳</span>
<span class="c w" style="right:335.79px">3.15</span>
<span class="c r" style="right:259.79px">19.38</span>
<span class="clip" style="left:1669px;width:32.5px"><span class="c g" style="right:0.79px">4461</span></span>
<span class="c r" style="right:152.29px">5210</span>
<span class="c r" style="right:84.79px">0.86</span>
<span class="c y" style="right:18.29px">55</span>
</div>
</div>
<div id="dlg">
<div id="dlgtitle">条件选股</div>
<svg class="abs" style="left:507px;top:2px" width="36" height="16" viewBox="0 0 36 16"><g stroke="#f0c8c8" stroke-width="1" fill="none"><path d="M3.5 7.5 H13"/><path d="M23 3 L32.5 12.5 M32.5 3 L23 12.5"/></g></svg>
<span class="lb" style="left:5px;top:34px">条件选股公式</span>
<div class="combo" style="left:84px;top:30px;width:284px;height:25px"><span class="lb" style="left:3px;top:4px;letter-spacing:0.2px">MACD双底背离 -</span><span class="cbtn"></span></div>
<div class="btn" style="left:372px;top:30px;width:42px">查找</div>
<div class="btn" style="left:419px;top:30px;width:57px">用法注释</div>
<div class="btn" style="left:480px;top:30px;width:57px">查看公式</div>
<div class="grp" style="left:3px;top:67px;width:210px;height:201px"></div>
<span class="grpl" style="left:10px;top:62.5px">计算参数</span>
<span class="lb" style="left:9.5px;top:93.5px">无参数需要设置</span>
<span class="lb" style="left:11.5px;top:242px">选股周期:</span>
<div class="combo" style="left:72px;top:238px;width:128px;height:25px"><span class="lb" style="left:4px;top:4px">日线</span><span class="cbtn"></span></div>
<div class="btn" style="left:222px;top:73px;width:66px">加入条件</div>
<div class="btn" style="left:222px;top:111px;width:66px">删除条件</div>
<div class="btn" style="left:222px;top:184px;width:66px">引入方案</div>
<div class="btn" style="left:222px;top:222px;width:66px">保存方案</div>
<span class="lb" style="left:301.5px;top:58px">选股条件列表</span>
<div class="abs" style="left:300px;top:75px;width:236px;height:174px;background:#fff;border:1px solid #828790"><div class="abs" style="left:1px;top:1px;width:232px;height:19px;background:#0078d7;color:#fff;line-height:20px;font-size:13.33px;padding-left:3px;white-space:pre;letter-spacing:0">MACD双底背离  日线</div></div>
<span class="radio" style="left:300.5px;top:256px"><i class="abs" style="left:2.4px;top:2.4px;width:4px;height:4px;border-radius:2px;background:#9a9a9a"></i></span>
<span class="lb" style="left:318.5px;top:254.5px;color:#a2a2a2">全部条件相与</span>
<span class="radio" style="left:443.5px;top:256px"></span>
<span class="lb" style="left:461.5px;top:254.5px;color:#a2a2a2">全部条件相或</span>
<span class="lb" style="left:473px;top:276px;color:#f00000">选股完毕.</span>
<div class="grp" style="left:3px;top:280px;width:210px;height:144px"></div>
<span class="grpl" style="left:10px;top:275.5px">选股范围</span>
<span class="lb" style="left:8.5px;top:294.5px;letter-spacing:1px">上证A股 深证A股</span>
<div class="btn" style="left:138px;top:289px;width:63px">改变范围</div>
<span class="chk" style="left:222px;top:298px"></span>
<span class="lb" style="left:239.8px;top:296.5px">使用涨跌不定周期</span>
<div class="sunk" style="left:342px;top:298px;width:194px;height:14px"></div>
<span class="lb" style="left:341px;top:320.5px">品种数</span>
<div class="sunk" style="left:379.5px;top:321px;width:42px;height:15px;padding-left:1px">4831</div>
<span class="lb" style="left:425.8px;top:320.5px">选中数</span>
<div class="sunk" style="left:464px;top:321px;width:72px;height:15px;padding-left:1px">17/0.4%</div>
<span class="chk" style="left:222px;top:349.3px"><svg class="abs" style="left:0;top:0" width="11" height="11" viewBox="0 0 11 11"><path d="M2 5.4 L4.4 8 L9 2.4" fill="none" stroke="#1a9c1a" stroke-width="1.8"/></svg></span>
<span class="lb" style="left:239.8px;top:348px">前复权数据</span>
<span class="chk" style="left:309px;top:349.3px"></span>
<span class="lb" style="left:326.7px;top:348px">剔除当前未交易的品种</span>
<span class="chk" style="left:456px;top:349.3px"></span>
<span class="lb" style="left:473px;top:348px">剔除ST品种</span>
<span class="chk" style="left:222px;top:378.3px"></span>
<span class="lb" style="left:239.8px;top:376.5px">时间段内满足条件</span>
<div class="btn" style="left:384px;top:372px;width:72px">选股入板块</div>
<div class="btn" style="left:470px;top:372px;width:66px">执行选股</div>
<div class="btn" style="left:470px;top:399px;width:66px">关闭</div>
</div>
<div id="wmk" style="position:absolute;left:0;top:28px;width:1920px;height:945px;overflow:hidden;pointer-events:none">
<div class="wm" style="left:50px;top:90.0px">www.cfchi.com</div>
<div class="wm" style="left:295px;top:90.0px">www.cfchi.com</div>
<div class="wm" style="left:540px;top:90.0px">www.cfchi.com</div>
<div class="wm" style="left:785px;top:90.0px">www.cfchi.com</div>
<div class="wm" style="left:1030px;top:90.0px">www.cfchi.com</div>
<div class="wm" style="left:1275px;top:90.0px">www.cfchi.com</div>
<div class="wm" style="left:1520px;top:90.0px">www.cfchi.com</div>
<div class="wm" style="left:1765px;top:90.0px">www.cfchi.com</div>
<div class="wm" style="left:2010px;top:90.0px">www.cfchi.com</div>
<div class="wm" style="left:50px;top:268.5px">www.cfchi.com</div>
<div class="wm" style="left:295px;top:268.5px">www.cfchi.com</div>
<div class="wm" style="left:540px;top:268.5px">www.cfchi.com</div>
<div class="wm" style="left:785px;top:268.5px">www.cfchi.com</div>
<div class="wm" style="left:1030px;top:268.5px">www.cfchi.com</div>
<div class="wm" style="left:1275px;top:268.5px">www.cfchi.com</div>
<div class="wm" style="left:1520px;top:268.5px">www.cfchi.com</div>
<div class="wm" style="left:1765px;top:268.5px">www.cfchi.com</div>
<div class="wm" style="left:2010px;top:268.5px">www.cfchi.com</div>
<div class="wm" style="left:50px;top:447.0px">www.cfchi.com</div>
<div class="wm" style="left:295px;top:447.0px">www.cfchi.com</div>
<div class="wm" style="left:540px;top:447.0px">www.cfchi.com</div>
<div class="wm" style="left:785px;top:447.0px">www.cfchi.com</div>
<div class="wm" style="left:1030px;top:447.0px">www.cfchi.com</div>
<div class="wm" style="left:1275px;top:447.0px">www.cfchi.com</div>
<div class="wm" style="left:1520px;top:447.0px">www.cfchi.com</div>
<div class="wm" style="left:1765px;top:447.0px">www.cfchi.com</div>
<div class="wm" style="left:2010px;top:447.0px">www.cfchi.com</div>
<div class="wm" style="left:50px;top:625.5px">www.cfchi.com</div>
<div class="wm" style="left:295px;top:625.5px">www.cfchi.com</div>
<div class="wm" style="left:540px;top:625.5px">www.cfchi.com</div>
<div class="wm" style="left:785px;top:625.5px">www.cfchi.com</div>
<div class="wm" style="left:1030px;top:625.5px">www.cfchi.com</div>
<div class="wm" style="left:1275px;top:625.5px">www.cfchi.com</div>
<div class="wm" style="left:1520px;top:625.5px">www.cfchi.com</div>
<div class="wm" style="left:1765px;top:625.5px">www.cfchi.com</div>
<div class="wm" style="left:2010px;top:625.5px">www.cfchi.com</div>
<div class="wm" style="left:50px;top:804.0px">www.cfchi.com</div>
<div class="wm" style="left:295px;top:804.0px">www.cfchi.com</div>
<div class="wm" style="left:540px;top:804.0px">www.cfchi.com</div>
<div class="wm" style="left:785px;top:804.0px">www.cfchi.com</div>
<div class="wm" style="left:1030px;top:804.0px">www.cfchi.com</div>
<div class="wm" style="left:1275px;top:804.0px">www.cfchi.com</div>
<div class="wm" style="left:1520px;top:804.0px">www.cfchi.com</div>
<div class="wm" style="left:1765px;top:804.0px">www.cfchi.com</div>
<div class="wm" style="left:2010px;top:804.0px">www.cfchi.com</div>
</div>
<div id="btabs">
<div class="bt " style="left:0px;width:47px">分类<span class="tri"></span></div>
<div class="bt red" style="left:48px;width:35px">自选</div>
<div class="bt " style="left:84px;width:47px">板块<span class="tri"></span></div>
<div class="bt " style="left:132px;width:47px">自定<span class="tri"></span></div>
<div class="bt dim" style="left:180px;width:47px">港股<span class="tri"></span></div>
<div class="bt dim" style="left:228px;width:47px">期权<span class="tri"></span></div>
<div class="bt dim" style="left:276px;width:71px">期货现货<span class="tri"></span></div>
<div class="bt dim" style="left:348px;width:71px">基金理财<span class="tri"></span></div>
<div class="bt dim" style="left:420px;width:71px">美股环球<span class="tri"></span></div>
<div class="bt dim" style="left:492px;width:71px">其它品种<span class="tri"></span></div>
<div class="abs" style="left:565px;top:1px;width:13px;height:15px;border:1px solid #2a2f3a;background:#000"></div>
<svg class="abs" style="left:569px;top:4px" width="6" height="9" viewBox="0 0 6 9"><path d="M5 0.8 V8.2 L1 4.5 Z" fill="#3c414c"/></svg>
<div class="abs" style="left:579px;top:1px;width:38px;height:15px;background:#232730"></div>
<div class="abs" style="left:1906px;top:1px;width:13px;height:15px;border:1px solid #242830;background:#000"></div>
<svg class="abs" style="left:1910px;top:4px" width="6" height="9" viewBox="0 0 6 9"><path d="M1 0.8 V8.2 L5 4.5 Z" fill="#2a2e38"/></svg>
</div>
<div id="strip"></div>
<div id="status">
<svg class="abs" style="left:2px;top:6px" width="17" height="17" viewBox="0 0 17 17">
<defs><linearGradient id="rb" x1="0" y1="0" x2="0" y2="1"><stop offset="0" stop-color="#aeb4c0"/><stop offset="1" stop-color="#6f7684"/></linearGradient></defs>
<circle cx="8.5" cy="8.5" r="7.6" fill="url(#rb)"/>
<path d="M5 5.2 L8.5 8.4 L12 5.2 M5 8.8 L8.5 12 L12 8.8" fill="none" stroke="#2b303a" stroke-width="1.3"/>
</svg>
<span class="st n" style="left:26px">上证</span>
<span class="st r" style="left:54px">3272.77</span>
<span class="st r" style="left:111px">10.72</span>
<span class="st r" style="left:152px">0.33%</span>
<span class="st n" style="left:196px">2112亿</span>
<span class="st n" style="left:245px">深证</span>
<span class="st r" style="left:273px">11951.7</span>
<span class="st r" style="left:330px">73.92</span>
<span class="st r" style="left:371px">0.62%</span>
<span class="st n" style="left:415px">2748亿</span>
<span class="st n" style="left:464px">沪深</span>
<span class="st r" style="left:492px">4122.06</span>
<span class="st r" style="left:550px">28.27</span>
<span class="st r" style="left:591px">0.69%</span>
<span class="st n" style="left:635px">1373亿</span>
<span class="st n" style="left:685px">创业</span>
<span class="st r" style="left:713px">2554.58</span>
<span class="st r" style="left:774px">6.36</span>
<span class="st r" style="left:811px">0.25%</span>
<span class="st n" style="left:855px">818.0亿</span>
<span class="st n" style="left:905px">科创</span>
<span class="st g" style="left:933px">1031.78</span>
<span class="st g" style="left:990px">-2.00</span>
<span class="st g" style="left:1031px">-0.19%</span>
<span class="st n" style="left:1075px">262.3亿</span>
<svg class="abs" style="left:1126px;top:5px" width="140" height="20" viewBox="0 0 140 20">
<rect x="2.5" y="3.5" width="49" height="6" fill="none" stroke="#fff" stroke-width="1"/>
<rect x="15" y="4" width="11.5" height="5" fill="#ff0000"/><rect x="26.5" y="4" width="13.5" height="5" fill="#008800"/>
<path d="M14.5 3.5 V9.5" stroke="#fff" stroke-width="1"/>
<rect x="54.5" y="3.5" width="49" height="6" fill="none" stroke="#fff" stroke-width="1"/>
<rect x="67" y="4" width="12" height="5" fill="#ff0000"/>
<path d="M66.5 3.5 V9.5" stroke="#fff" stroke-width="1"/>
<path d="M8 10 H10 V13.6 H12.2 L9 17.2 L5.8 13.6 H8 Z" fill="#ff0000"/>
<path d="M14 11.3 h6 v1.6 h-6z M14 14.2 h6 v1.6 h-6z" fill="#ff0000"/>
<path d="M24 10 H26 V13.6 H28.2 L25 17.2 L21.8 13.6 H24 Z" fill="#ff0000"/>
<path d="M30 11.3 h6 v1.6 h-6z M30 14.2 h6 v1.6 h-6z" fill="#ff0000"/>
<path d="M40 17.2 H42 V13.6 H44.2 L41 10 L37.8 13.6 H40 Z" fill="#ff0000"/>
<path d="M48 10 H50 V13.6 H52.2 L49 17.2 L45.8 13.6 H48 Z" fill="#009000"/>
<path d="M60 10 H62 V13.6 H64.2 L61 17.2 L57.8 13.6 H60 Z" fill="#ff0000"/>
<path d="M66 11.3 h6 v1.6 h-6z M66 14.2 h6 v1.6 h-6z" fill="#ff0000"/>
</svg>
<span class="st n" style="left:1357px;letter-spacing:0;line-height:28px;text-decoration:underline">2</span>
<span class="st n" style="left:1754px;letter-spacing:0.2px;line-height:25px">7x24</span>
<svg class="abs" style="left:1796px;top:3px" width="112" height="20" viewBox="0 0 112 20">
<defs><linearGradient id="ig" x1="0" y1="3" x2="0" y2="18" gradientUnits="userSpaceOnUse"><stop offset="0" stop-color="#b0b7c4"/><stop offset="1" stop-color="#79818f"/></linearGradient></defs>
<g fill="url(#ig)">
<rect x="2" y="4" width="15" height="12" rx="2"/>
<rect x="32" y="4" width="15" height="9.6" rx="1.6"/><rect x="38.4" y="13.5" width="2.2" height="1.8"/><rect x="35.8" y="15.2" width="7.4" height="1"/>
<path d="M63.9 3.3 C62 6.5 61.8 10.5 64.6 13.6 C67.5 16.6 72.5 16.6 76 13.2 Z"/>
<path d="M66.4 14.4 L62.1 17.6 H68.7 L68.4 15.6 Z"/>
<circle cx="73.2" cy="5.7" r="1.25"/>
<circle cx="99.6" cy="10.2" r="7.65"/>
</g>
<path d="M69.8 9.1 L72.8 6.1" stroke="#a3aab7" stroke-width="1.3" fill="none"/>
<g fill="#181c24">
<path d="M5.15 6.95 h1.1 v1 h-1.1z M7.2 6.95 h1.1 v1 h-1.1z M9.25 6.95 h1.1 v1 h-1.1z M11.3 6.95 h1.1 v1 h-1.1z M13.3 6.95 h1.1 v1 h-1.1z M5.15 8.9 h1.1 v1 h-1.1z M7.2 8.9 h1.1 v1 h-1.1z M9.25 8.9 h1.1 v1 h-1.1z M11.3 8.9 h1.1 v1 h-1.1z M13.3 8.9 h1.1 v1 h-1.1z M5.15 12 h8.9 v1 h-8.9z"/>
<path d="M100.7 6.6 L96.7 10.6 H99.6 L98.9 14.2 L102.9 9.9 H100 Z"/>
</g>
<path d="M34 9 H36.6 L37.8 7.4 L39.6 11 L40.8 9 H44.8" fill="none" stroke="#181c24" stroke-width="1"/>
</svg>
</div>
<div id="bline"><div class="abs" style="left:169px;top:0;width:44px;height:2px;background:#8a8c86"></div></div>
<div class="abs" style="left:1200px;top:1033px;width:6px;height:2px;background:#ff0000"></div><div class="abs" style="left:1208px;top:1033px;width:6px;height:2px;background:#ff0000"></div><div class="abs" style="left:1218px;top:1033px;width:2px;height:2px;background:#ff0000"></div><div class="abs" style="left:1226px;top:1033px;width:2px;height:2px;background:#00a000"></div>
<div id="sogou">
<span class="abs" style="left:11.5px;top:3px;font-size:15px;line-height:20px;font-weight:bold;color:#4b4f63">五</span>
<svg class="abs" style="left:32px;top:2px" width="110" height="20" viewBox="0 0 110 20">
<g fill="#4b4f63">
<path d="M12.6 2.4 C14.2 6.2 12.8 11.2 8.2 12.9 C6.4 13.6 4.6 13.4 3 12.7 C4.6 15.8 8.4 17.4 12 16 C16.4 14.3 18 9.4 16 5.4 C15.2 3.9 14 2.9 12.6 2.4 Z"/>
<circle cx="26.3" cy="7.4" r="1.9" fill="none" stroke="#4b4f63" stroke-width="1.3"/>
<path d="M32.1 10.2 a1.7 1.7 0 1 1 2.4 1.6 q-0.2 2.2 -2.2 3.4 q1.1 -1.5 0.9 -3.3 q-1.1 -0.5 -1.1 -1.7z"/>
<rect x="44.5" y="4.5" width="16" height="11" rx="1.8" fill="none" stroke="#4b4f63" stroke-width="1.5"/>
<path d="M47 7 h1.6 v1.6 h-1.6z M49.8 7 h1.6 v1.6 h-1.6z M52.6 7 h1.6 v1.6 h-1.6z M55.4 7 h1.6 v1.6 h-1.6z M47 9.6 h1.6 v1.6 h-1.6z M49.8 9.6 h1.6 v1.6 h-1.6z M52.6 9.6 h1.6 v1.6 h-1.6z M55.4 9.6 h1.6 v1.6 h-1.6z M48.5 12.3 h8 v1.4 h-8z"/>
<circle cx="76" cy="5.6" r="3"/>
<path d="M70 11 Q76 7.5 82 11 L80.2 16.5 H71.8 Z"/>
<circle cx="93.2" cy="6.7" r="3.1"/><circle cx="100.2" cy="6.7" r="3.1" fill="none" stroke="#4b4f63" stroke-width="1.4"/><circle cx="93.2" cy="13.7" r="3.1"/><circle cx="100.2" cy="13.7" r="3.1"/>
</g></svg>
</div>
<svg class="abs" style="left:1191.9px;top:1004.2px" width="32" height="30" viewBox="-16 -15 32 30">
<defs><linearGradient id="sg" x1="0" y1="0" x2="0" y2="1"><stop offset="0" stop-color="#45cc2e"/><stop offset="1" stop-color="#2fa81e"/></linearGradient></defs>
<g transform="rotate(-14.4)">
<rect x="-11.6" y="-11" width="23.2" height="22" rx="3" fill="url(#sg)"/>
<path d="M8.6 -4.3 C6.5 -5.6 3.8 -6.3 1.2 -6.35 C-1.5 -6.5 -4 -6.4 -5.6 -5.8 C-7.2 -5.2 -8.2 -4.3 -8 -3.2 C-7.8 -2 -6.6 -1.2 -5.3 -0.8 C-3.2 -0.2 -1 0.1 1.1 0.36 C3.2 0.7 5.3 1.3 7 2.2 C7.9 2.8 8.4 3.6 8.1 4.45 C7.7 5.6 6.5 6.4 5 6.8 C2.8 7.3 0 7.1 -2.1 6.6 C-4 6.2 -6 5.7 -8 5.05" fill="none" stroke="#fff" stroke-width="3.3" stroke-linecap="butt"/>
<path d="M-5.3 -0.8 C-3.2 -0.2 -1 0.1 1.1 0.36 C3.2 0.7 5.3 1.3 7 2.2" fill="none" stroke="#fff" stroke-width="4.3" stroke-linecap="round"/>
</g></svg>
</body></html>
